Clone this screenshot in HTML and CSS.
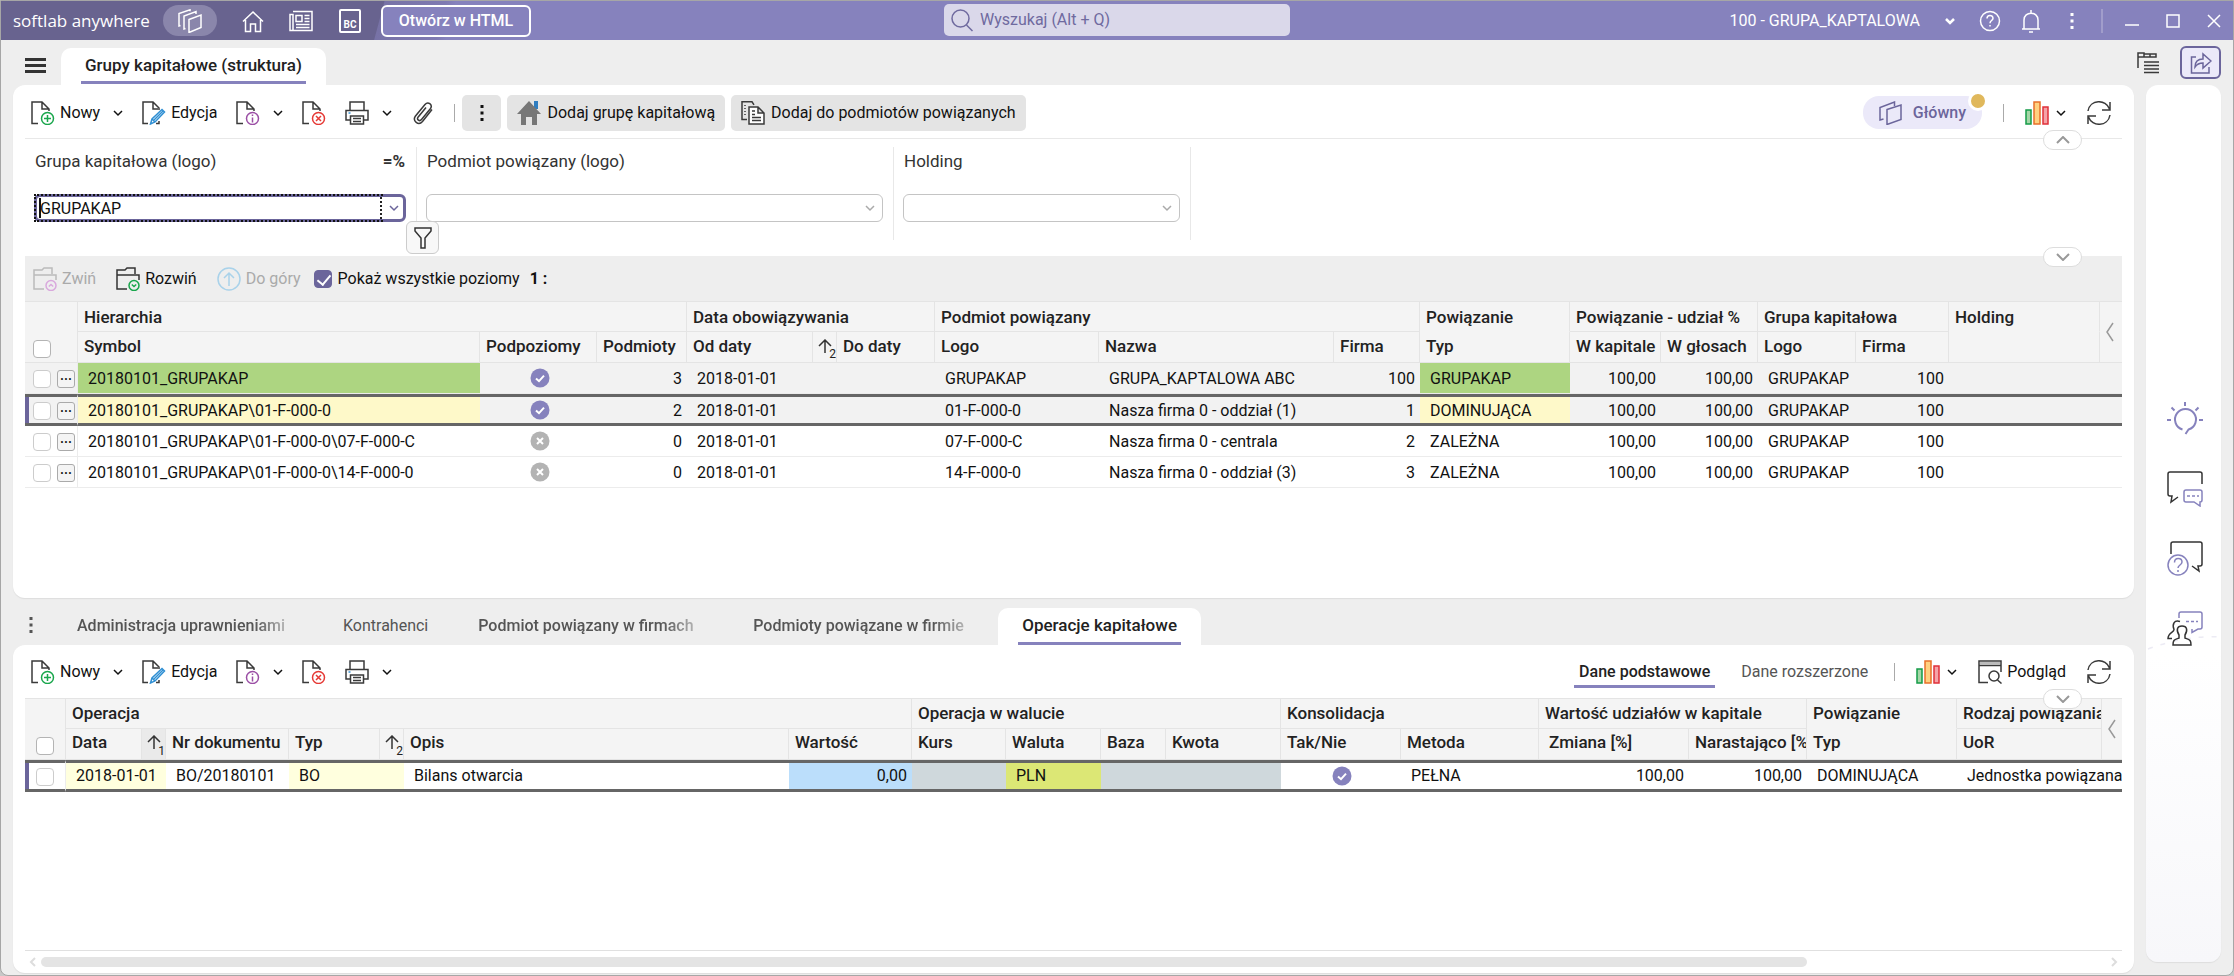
FILE: index.html
```html
<!DOCTYPE html>
<html lang="pl">
<head>
    <meta charset="UTF-8">
    <meta name="viewport" content="width=device-width, initial-scale=1.0">
    <title>Grupy kapitałowe (struktura)</title>
    <link rel="stylesheet" href="styles.css">
</head>
<body>
    <!-- Icon sprite -->
    <svg class="sprite" aria-hidden="true">
        <symbol id="doc-add" viewBox="0 0 24 24">
            <path d="M7 22.5H1V1h10l7 7v2M11 1v7h7" stroke="#3a3a3a" />
            <circle cx="16.500" cy="17.500" r="6" stroke="#19a64c" />
            <path d="M16.500 14v7M13 17.500h7" stroke="#19a64c" />
        </symbol>
        <symbol id="doc-edit" viewBox="0 0 24 24">
            <path d="M6 22.500H1V1h10l6 6v2M11 1v7h5M14 22.500h3V20" stroke="#3a3a3a" />
            <path d="M8.500 23l1.500-5L20 8.500l2.500 2.500L13 21z" fill="#fff" stroke="#2f8fd3" />
            <path d="M10 18l3 3M11.500 19.500L21 10" stroke="#2f8fd3" />
        </symbol>
        <symbol id="doc-info" viewBox="0 0 24 24">
            <path d="M7 22.500H1V1h10l7 7v2M11 1v7h7" stroke="#3a3a3a" />
            <circle cx="16.500" cy="17.500" r="6" stroke="#9b4fa5" />
            <path d="M16.500 16.500v5M16.500 13.500v1.500" stroke="#9b4fa5" />
        </symbol>
        <symbol id="doc-del" viewBox="0 0 24 24">
            <path d="M7 22.500H1V1h10l7 7v2M11 1v7h7" stroke="#3a3a3a" />
            <circle cx="16.500" cy="17.500" r="6" stroke="#e53935" />
            <path d="M14 15l5 5M19 15l-5 5" stroke="#e53935" />
        </symbol>
        <symbol id="printer" viewBox="0 0 24 24">
            <path d="M5 9V1h14v8M5 19H1V9.500h22V19h-4M5.500 15h13v8h-13zM8 17.500h8M8 20.500h8" stroke="#3a3a3a" />
            <path d="M3.500 12h2" stroke="#2f8fd3" />
        </symbol>
        <symbol id="clip" viewBox="0 0 24 24">
            <path d="M21 8.500l-9.500 12c-4 4.500-10.500-.5-7-5.500L14 3.500c3-3.500 8 0 5.500 4L10.500 18.500c-2 2.500-5 0-3.500-2.300L15 6.500" stroke="#3a3a3a" />
        </symbol>
        <symbol id="house" viewBox="0 0 24 24">
            <path d="M17 0h4v8h-4z" fill="#2f7dc0" stroke="none" />
            <path d="M12 0L0 13h4v11h5v-8h6v8h5V13h4z" fill="#777" stroke="none" />
        </symbol>
        <symbol id="copy" viewBox="0 0 24 24">
            <path d="M6 18.500H1V.800h10l2 3" stroke="#3a3a3a" />
            <path d="M4 4v12" stroke="#3a3a3a" stroke-dasharray="1 2" />
            <path d="M8 6h9l6 6v11H8zM17 6v6h6M11 10h3M11 13.500h3M11 16.500h9M11 19.500h9" fill="#fff" stroke="#3a3a3a" />
        </symbol>
        <symbol id="chev" viewBox="0 0 10 10">
            <path d="M1 3l4 4 4-4" stroke="currentColor" />
        </symbol>
        <symbol id="bars" viewBox="0 0 24 24">
            <path d="M1 9h5v14H1z" fill="#a5d6a7" stroke="#159c48" />
            <path d="M9 1h6v22H9z" fill="#ffd180" stroke="#e8702a" />
            <path d="M18 6h5v17h-5z" fill="#f4a3a8" stroke="#e0303a" />
        </symbol>
        <symbol id="refresh" viewBox="0 0 24 24">
            <path d="M1 10C3-2 19-2 22.500 8M23 1v8h-8M23 14c-2 12-18 12-21.500 2M1 23v-8h8" stroke="#3a3a3a" />
        </symbol>
        <symbol id="layers" viewBox="0 0 24 24">
            <path d="M8 8.500L22 4v14.500L8 23.500zM4.500 18L1 19V6.500L15.500 1v4" stroke="currentColor" />
        </symbol>
        <symbol id="layers3" viewBox="0 0 24 24">
            <path d="M11 10.500l12-4.500v12.500l-12 5zM7.500 19.500L6 20V7l12-4.500v2.500M2.500 16.500L1 17V4.500L12 .800v1.500" stroke="currentColor" />
        </symbol>
        <symbol id="folder-up" viewBox="0 0 24 24">
            <path d="M11 22H1V3h8l2-2h8v6M1 8h22v5" stroke="#bbb" />
            <circle cx="18" cy="18.500" r="5" stroke="#d9a9dd" />
            <path d="M15.800 19.500l2.200-2 2.200 2" stroke="#d9a9dd" />
        </symbol>
        <symbol id="folder-down" viewBox="0 0 24 24">
            <path d="M11 22H1V3h8l2-2h8v6M1 8h22v5" stroke="#333" />
            <circle cx="18" cy="18.500" r="5" stroke="#19a64c" />
            <path d="M15.800 17.500l2.200 2 2.200-2" stroke="#19a64c" />
        </symbol>
        <symbol id="up" viewBox="0 0 24 24">
            <circle cx="12" cy="12" r="11" stroke="#a9d2ea" />
            <path d="M12 19V6M7 11l5-5 5 5" stroke="#a9d2ea" />
        </symbol>
        <symbol id="sort" viewBox="0 0 14 14">
            <path d="M7 14V1M1 7l6-6 6 6" stroke="#333" />
        </symbol>
        <symbol id="yes" viewBox="0 0 20 20">
            <circle cx="10" cy="10" r="9.500" fill="#8682bd" />
            <path d="M6 10.500l3 2.700 5-5.500" stroke="#fff" stroke-width="2" />
        </symbol>
        <symbol id="no" viewBox="0 0 20 20">
            <circle cx="10" cy="10" r="9.500" fill="#b3b3b3" />
            <path d="M7 7l6 6M13 7l-6 6" stroke="#fff" stroke-width="2" />
        </symbol>
        <symbol id="dots" viewBox="0 0 4 20">
            <path d="M.5 2h3v3h-3zM.5 8.500h3v3h-3zM.5 15h3v3h-3z" fill="currentColor" />
        </symbol>
    </svg>

    <div class="window">
        <header class="titlebar">
            <span class="brand">softlab anywhere</span>
            <button class="app-pill" aria-label="Moduły"><svg class="icon"><use href="#layers3" /></svg></button>
            <button class="tb-btn tb-home" aria-label="Start">
                <svg class="icon" viewBox="0 0 24 24"><path d="M2 12.500L12 3l10 9.500M4.500 11v11.500h5V15h5v7.500h5V11" stroke="#fff" /></svg>
            </button>
            <button class="tb-btn tb-news" aria-label="Wiadomości">
                <svg class="icon" viewBox="0 0 24 24"><path d="M4 2.500h19v19H1v-16h3v16M7 6.500h6v6H7zM15.500 6.500h5M15.500 9.500h5M15.500 12.500h5M7 15.500h13.500M7 18.500h13.500" stroke="#fff" /></svg>
            </button>
            <button class="bc-btn">BC</button>
            <a class="html-btn" href="#">Otwórz w HTML</a>
            <label class="search">
                <svg class="icon" viewBox="0 0 24 24"><circle cx="10.500" cy="10.500" r="8.500" stroke="#6f6a9f" /><path d="M16.500 17l6 6" stroke="#6f6a9f" /></svg>
                <input type="text" placeholder="Wyszukaj (Alt + Q)" aria-label="Wyszukaj">
            </label>
            <div class="tb-right">
                <button class="company">100 - GRUPA_KAPTALOWA <svg class="chev"><use href="#chev" /></svg></button>
                <button class="tb-btn" aria-label="Pomoc">
                    <svg class="icon" viewBox="0 0 24 24"><circle cx="12" cy="12" r="9.500" stroke="#fff" /><path d="M9 9.500c0-4 6-4 6-.3 0 2.300-3 2.300-3 5M12 16v1.500" stroke="#fff" /></svg>
                </button>
                <button class="tb-btn" aria-label="Powiadomienia">
                    <svg class="icon" viewBox="0 0 24 24"><path d="M3 20h18M5 20v-9c0-9 14-9 14 0v9M12 1v3M10 23h4" stroke="#fff" /></svg>
                </button>
                <button class="tb-btn" aria-label="Więcej"><svg class="dots"><use href="#dots" /></svg></button>
                <span class="tb-sep"></span>
                <div class="win-btns">
                    <button aria-label="Minimalizuj"><svg viewBox="0 0 14 14"><path d="M0 11h14" stroke="#fff" /></svg></button>
                    <button aria-label="Maksymalizuj"><svg viewBox="0 0 14 14"><path d="M1 1h12v12H1z" stroke="#fff" /></svg></button>
                    <button aria-label="Zamknij"><svg viewBox="0 0 14 14"><path d="M1 1l12 12M13 1L1 13" stroke="#fff" /></svg></button>
                </div>
            </div>
        </header>

        <nav class="topnav">
            <button class="burger" aria-label="Menu"><span></span><span></span><span></span></button>
            <a class="tab active" href="#">Grupy kapitałowe (struktura)</a>
            <div class="topnav-right">
                <button class="plain" aria-label="Lista">
                    <svg class="icon22" viewBox="0 0 22 22"><path d="M1 16V1h6v4H1M7 2h6v3H7M13 2h6v3h-6" stroke="#3a3a3a" /><path d="M7 10h15M7 13.500h15M7 17h15M7 20.500h15" stroke="#3a3a3a" /></svg>
                </button>
                <button class="share" aria-label="Udostępnij">
                    <svg class="icon22" viewBox="0 0 22 22"><path d="M6 5H1.500v16H19v-6M5 15c0-6 3-8 8-8V2l8 7-8 7v-5c-4 0-6 1-8 4z" stroke="#6b659b" /></svg>
                </button>
            </div>
        </nav>

        <div class="workspace">
            <main class="panes">
                <section class="panel panel-top">
                    <div class="toolbar">
                        <button class="tool"><svg class="icon"><use href="#doc-add" /></svg>Nowy<svg class="chev"><use href="#chev" /></svg></button>
                        <button class="tool"><svg class="icon"><use href="#doc-edit" /></svg>Edycja</button>
                        <button class="tool" aria-label="Informacje"><svg class="icon"><use href="#doc-info" /></svg><svg class="chev"><use href="#chev" /></svg></button>
                        <button class="tool" aria-label="Usuń"><svg class="icon"><use href="#doc-del" /></svg></button>
                        <button class="tool" aria-label="Drukuj"><svg class="icon"><use href="#printer" /></svg><svg class="chev"><use href="#chev" /></svg></button>
                        <button class="tool" aria-label="Załączniki"><svg class="icon"><use href="#clip" /></svg></button>
                        <span class="sep"></span>
                        <div class="tool-group">
                            <button class="gray-btn more" aria-label="Więcej"><svg class="dots"><use href="#dots" /></svg></button>
                            <button class="gray-btn"><svg class="icon"><use href="#house" /></svg>Dodaj grupę kapitałową</button>
                            <button class="gray-btn"><svg class="icon"><use href="#copy" /></svg>Dodaj do podmiotów powiązanych</button>
                        </div>
                        <div class="toolbar-right">
                            <button class="view-pill"><svg class="icon"><use href="#layers" /></svg>Główny<span class="dot"></span></button>
                            <span class="sep"></span>
                            <button class="tool tight" aria-label="Wykresy"><svg class="icon"><use href="#bars" /></svg><svg class="chev"><use href="#chev" /></svg></button>
                            <button class="tool" aria-label="Odśwież"><svg class="icon"><use href="#refresh" /></svg></button>
                        </div>
                    </div>

                    <div class="filters">
                        <button class="fold fold-up" aria-label="Zwiń filtry"><svg viewBox="0 0 14 8"><path d="M1 7l6-6 6 6" stroke="#999" stroke-width="2" /></svg></button>
                        <div class="filter active">
                            <div class="filter-head"><label for="f1">Grupa kapitałowa (logo)</label><b>=%</b></div>
                            <div class="combo"><input id="f1" type="text" value="GRUPAKAP"><svg class="chev"><use href="#chev" /></svg></div>
                            <button class="funnel" aria-label="Filtruj"><svg viewBox="0 0 18 22"><path d="M1 1h16v3l-6 7v10H7V11L1 4z" stroke="#333" /></svg></button>
                        </div>
                        <div class="filter">
                            <div class="filter-head"><label for="f2">Podmiot powiązany (logo)</label></div>
                            <div class="combo"><input id="f2" type="text"><svg class="chev"><use href="#chev" /></svg></div>
                        </div>
                        <div class="filter">
                            <div class="filter-head"><label for="f3">Holding</label></div>
                            <div class="combo"><input id="f3" type="text"><svg class="chev"><use href="#chev" /></svg></div>
                        </div>
                    </div>

                    <div class="levels">
                        <button class="fold" aria-label="Rozwiń"><svg viewBox="0 0 14 8"><path d="M1 1l6 6 6-6" stroke="#999" stroke-width="2" /></svg></button>
                        <button class="tool level" disabled><svg class="icon"><use href="#folder-up" /></svg>Zwiń</button>
                        <button class="tool level"><svg class="icon"><use href="#folder-down" /></svg>Rozwiń</button>
                        <button class="tool level" disabled><svg class="icon"><use href="#up" /></svg>Do góry</button>
                        <label class="all-levels"><input type="checkbox" checked> Pokaż wszystkie poziomy</label>
                        <b>1 :</b>
                    </div>

                    <table class="grid grid-struct">
                        <colgroup>
                            <col class="w53"><col class="w402"><col class="w117"><col class="w90"><col class="w126"><col class="w24"><col class="w98"><col class="w164"><col class="w235"><col class="w86"><col class="w150"><col class="w91"><col class="w97"><col class="w98"><col class="w93"><col><col class="w22">
                        </colgroup>
                        <thead>
                            <tr>
                                <th rowspan="2" class="pick"><input type="checkbox" aria-label="Zaznacz wszystkie"></th>
                                <th colspan="3">Hierarchia</th>
                                <th colspan="3">Data obowiązywania</th>
                                <th colspan="3">Podmiot powiązany</th>
                                <th class="open">Powiązanie</th>
                                <th colspan="2">Powiązanie - udział %</th>
                                <th colspan="2">Grupa kapitałowa</th>
                                <th class="open">Holding</th>
                                <th rowspan="2" class="slide"><svg viewBox="0 0 8 20"><path d="M7 1L1 10l6 9" stroke="#999" /></svg></th>
                            </tr>
                            <tr>
                                <th>Symbol</th>
                                <th>Podpoziomy</th>
                                <th>Podmioty</th>
                                <th>Od daty</th>
                                <th class="sort"><svg><use href="#sort" /></svg><small>2</small></th>
                                <th>Do daty</th>
                                <th>Logo</th>
                                <th>Nazwa</th>
                                <th>Firma</th>
                                <th>Typ</th>
                                <th>W kapitale</th>
                                <th>W głosach</th>
                                <th>Logo</th>
                                <th>Firma</th>
                                <th></th>
                            </tr>
                        </thead>
                        <tbody>
                            <tr class="shade">
                                <td class="pick"><input type="checkbox" aria-label="Zaznacz"><button>···</button></td>
                                <td class="green">20180101_GRUPAKAP</td>
                                <td class="mid"><svg class="state"><use href="#yes" /></svg></td>
                                <td class="num">3</td>
                                <td colspan="2">2018-01-01</td>
                                <td></td>
                                <td>GRUPAKAP</td>
                                <td>GRUPA_KAPTALOWA ABC</td>
                                <td class="num">100</td>
                                <td class="green">GRUPAKAP</td>
                                <td class="num">100,00</td>
                                <td class="num">100,00</td>
                                <td>GRUPAKAP</td>
                                <td class="num">100</td>
                                <td colspan="2"></td>
                            </tr>
                            <tr class="shade selected">
                                <td class="pick"><input type="checkbox" aria-label="Zaznacz"><button>···</button></td>
                                <td class="yellow">20180101_GRUPAKAP\01-F-000-0</td>
                                <td class="mid"><svg class="state"><use href="#yes" /></svg></td>
                                <td class="num">2</td>
                                <td colspan="2">2018-01-01</td>
                                <td></td>
                                <td>01-F-000-0</td>
                                <td>Nasza firma 0 - oddział (1)</td>
                                <td class="num">1</td>
                                <td class="yellow">DOMINUJĄCA</td>
                                <td class="num">100,00</td>
                                <td class="num">100,00</td>
                                <td>GRUPAKAP</td>
                                <td class="num">100</td>
                                <td colspan="2"></td>
                            </tr>
                            <tr>
                                <td class="pick"><input type="checkbox" aria-label="Zaznacz"><button>···</button></td>
                                <td>20180101_GRUPAKAP\01-F-000-0\07-F-000-C</td>
                                <td class="mid"><svg class="state"><use href="#no" /></svg></td>
                                <td class="num">0</td>
                                <td colspan="2">2018-01-01</td>
                                <td></td>
                                <td>07-F-000-C</td>
                                <td>Nasza firma 0 - centrala</td>
                                <td class="num">2</td>
                                <td>ZALEŻNA</td>
                                <td class="num">100,00</td>
                                <td class="num">100,00</td>
                                <td>GRUPAKAP</td>
                                <td class="num">100</td>
                                <td colspan="2"></td>
                            </tr>
                            <tr>
                                <td class="pick"><input type="checkbox" aria-label="Zaznacz"><button>···</button></td>
                                <td>20180101_GRUPAKAP\01-F-000-0\14-F-000-0</td>
                                <td class="mid"><svg class="state"><use href="#no" /></svg></td>
                                <td class="num">0</td>
                                <td colspan="2">2018-01-01</td>
                                <td></td>
                                <td>14-F-000-0</td>
                                <td>Nasza firma 0 - oddział (3)</td>
                                <td class="num">3</td>
                                <td>ZALEŻNA</td>
                                <td class="num">100,00</td>
                                <td class="num">100,00</td>
                                <td>GRUPAKAP</td>
                                <td class="num">100</td>
                                <td colspan="2"></td>
                            </tr>
                        </tbody>
                    </table>
                </section>

                <nav class="subnav">
                    <button class="plain subnav-more" aria-label="Więcej"><svg class="dots"><use href="#dots" /></svg></button>
                    <a class="subtab fade w216" href="#">Administracja uprawnieniami</a>
                    <a class="subtab light" href="#">Kontrahenci</a>
                    <a class="subtab fade w225" href="#">Podmiot powiązany w firmach</a>
                    <a class="subtab fade w220" href="#">Podmioty powiązane w firmie</a>
                    <a class="tab active" href="#">Operacje kapitałowe</a>
                </nav>

                <section class="panel panel-bottom">
                    <div class="toolbar">
                        <button class="tool"><svg class="icon"><use href="#doc-add" /></svg>Nowy<svg class="chev"><use href="#chev" /></svg></button>
                        <button class="tool"><svg class="icon"><use href="#doc-edit" /></svg>Edycja</button>
                        <button class="tool" aria-label="Informacje"><svg class="icon"><use href="#doc-info" /></svg><svg class="chev"><use href="#chev" /></svg></button>
                        <button class="tool" aria-label="Usuń"><svg class="icon"><use href="#doc-del" /></svg></button>
                        <button class="tool" aria-label="Drukuj"><svg class="icon"><use href="#printer" /></svg><svg class="chev"><use href="#chev" /></svg></button>
                        <div class="toolbar-right">
                            <a class="view active" href="#">Dane podstawowe</a>
                            <a class="view" href="#">Dane rozszerzone</a>
                            <span class="sep"></span>
                            <button class="tool tight" aria-label="Wykresy"><svg class="icon"><use href="#bars" /></svg><svg class="chev"><use href="#chev" /></svg></button>
                            <button class="tool"><svg class="icon" viewBox="0 0 24 24"><path d="M10 22.500H1V1h22v11M1 5.500h22" stroke="#3a3a3a" /><path d="M2 2h20v3H2z" fill="#bbb" /><circle cx="16" cy="16" r="5" stroke="#3a3a3a" /><path d="M19.500 20l4 3.500" stroke="#3a3a3a" /></svg>Podgląd</button>
                            <button class="tool" aria-label="Odśwież"><svg class="icon"><use href="#refresh" /></svg></button>
                        </div>
                    </div>

                    <div class="ops">
                        <button class="fold" aria-label="Rozwiń"><svg viewBox="0 0 14 8"><path d="M1 1l6 6 6-6" stroke="#999" stroke-width="2" /></svg></button>
                        <table class="grid grid-ops">
                            <colgroup>
                                <col class="w41"><col class="w76"><col class="w24"><col class="w123"><col class="w91"><col class="w24"><col><col class="w123"><col class="w94"><col class="w95"><col class="w65"><col class="w115"><col class="w120"><col class="w138"><col class="w150"><col class="w118"><col class="w150"><col class="w145"><col class="w20">
                            </colgroup>
                            <thead>
                                <tr>
                                    <th rowspan="2" class="pick"><input type="checkbox" aria-label="Zaznacz wszystkie"></th>
                                    <th colspan="7">Operacja</th>
                                    <th colspan="4">Operacja w walucie</th>
                                    <th colspan="2">Konsolidacja</th>
                                    <th colspan="2">Wartość udziałów w kapitale</th>
                                    <th class="open">Powiązanie</th>
                                    <th>Rodzaj powiązania</th>
                                    <th rowspan="2" class="slide"><svg viewBox="0 0 8 20"><path d="M7 1L1 10l6 9" stroke="#999" /></svg></th>
                                </tr>
                                <tr>
                                    <th>Data</th>
                                    <th class="sort on"><svg><use href="#sort" /></svg><small>1</small></th>
                                    <th>Nr dokumentu</th>
                                    <th>Typ</th>
                                    <th class="sort"><svg><use href="#sort" /></svg><small>2</small></th>
                                    <th>Opis</th>
                                    <th>Wartość</th>
                                    <th>Kurs</th>
                                    <th>Waluta</th>
                                    <th>Baza</th>
                                    <th>Kwota</th>
                                    <th>Tak/Nie</th>
                                    <th>Metoda</th>
                                    <th class="inset">Zmiana [%]</th>
                                    <th>Narastająco [%]</th>
                                    <th>Typ</th>
                                    <th>UoR</th>
                                </tr>
                            </thead>
                            <tbody>
                                <tr class="selected">
                                    <td class="pick"><input type="checkbox" aria-label="Zaznacz"></td>
                                    <td colspan="2" class="cream">2018-01-01</td>
                                    <td>BO/20180101</td>
                                    <td colspan="2" class="cream">BO</td>
                                    <td>Bilans otwarcia</td>
                                    <td class="num blue">0,00</td>
                                    <td class="steel"></td>
                                    <td class="lime">PLN</td>
                                    <td class="steel"></td>
                                    <td class="steel"></td>
                                    <td class="mid"><svg class="state"><use href="#yes" /></svg></td>
                                    <td>PEŁNA</td>
                                    <td class="num">100,00</td>
                                    <td class="num">100,00</td>
                                    <td>DOMINUJĄCA</td>
                                    <td colspan="2">Jednostka powiązana</td>
                                </tr>
                            </tbody>
                        </table>
                    </div>

                    <div class="hscroll">
                        <svg viewBox="0 0 8 10"><path d="M6 1L2 5l4 4" stroke="#ddd" stroke-width="2" /></svg>
                        <div class="track"><div class="thumb"></div></div>
                        <svg viewBox="0 0 8 10"><path d="M2 1l4 4-4 4" stroke="#ddd" stroke-width="2" /></svg>
                    </div>
                </section>
            </main>

            <aside class="side">
                <svg class="arc" viewBox="0 0 75 40"><path d="M2 14Q40 0 75 2" stroke="#ecebf4" stroke-dasharray="5 8" /></svg>
                <button class="plain" aria-label="Pomysły">
                    <svg viewBox="0 0 36 36"><path d="M15.500 28.500a10.500 10.500 0 1 1 6 0l-3 4.500" stroke="#8682bd" stroke-width="2" /><path d="M18 1v4M0 19h4M32 19h4M4.500 6.500l3 3M31.500 6.500l-3 3" stroke="#8682bd" stroke-width="2" /></svg>
                </button>
                <button class="plain" aria-label="Czat">
                    <svg viewBox="0 0 36 36"><path d="M35 13V3q0-2-2-2H3Q1 1 1 3v20q0 2 2 2h2l-1 6 7-5" stroke="#333" /><path d="M19 19h14q2 0 2 2v8q0 2-2 2v4l-6-4h-8q-2 0-2-2v-8q0-2 2-2z" stroke="#8682bd" /><path d="M20 25h12" stroke="#8682bd" stroke-dasharray="3 2" /></svg>
                </button>
                <button class="plain" aria-label="Pytania">
                    <svg viewBox="0 0 36 36"><path d="M4 13V3q0-2 2-2h27q2 0 2 2v20q0 2-2 2h-2l1 5-7-5" stroke="#333" /><circle cx="11" cy="24" r="10" stroke="#8682bd" /><path d="M7.500 21.500c0-5.500 7.500-5 7.500-.5 0 3-4 3-4 6M11 29v2" stroke="#8682bd" /></svg>
                </button>
                <button class="plain" aria-label="Społeczność">
                    <svg viewBox="0 0 36 36"><path d="M12 7V3q0-2 2-2h19q2 0 2 2v13q0 2-2 2h-2l-6 3.500V18" stroke="#8682bd" /><path d="M19 10.500h12" stroke="#8682bd" stroke-dasharray="3 2" /><path d="M13 10.500c-6-2-8 3-6 8 0 3-6 3-6 9h4" stroke="#333" /><path d="M6 34c0-5 1-5 6-7v-3c-3-5-2-9 3-9s6 4 3 9v3c5 2 6 2 6 7z" stroke="#333" /></svg>
                </button>
            </aside>
        </div>
    </div>
</body>
</html>
```
FILE: styles.css
```css
* {
    box-sizing: border-box;
}

body {
    margin: 0;
    background: #c8c8c8;
    font-family: Roboto, "Liberation Sans", sans-serif;
    font-size: 16px;
    line-height: 20px;
    color: #111;
}

button, input {
    font: inherit;
    color: inherit;
    margin: 0;
    padding: 0;
    border: 0;
    background: none;
}

a {
    color: inherit;
    text-decoration: none;
}

svg {
    display: block;
    fill: none;
    stroke-width: 1.5;
    flex-shrink: 0;
}

.sprite {
    position: absolute;
    width: 0;
    height: 0;
}

.icon {
    width: 24px;
    height: 24px;
}

.icon22 {
    width: 22px;
    height: 22px;
}

.chev {
    width: 10px;
    height: 10px;
}

.dots {
    width: 4px;
    height: 20px;
}

.plain {
    display: flex;
}

.window {
    display: flex;
    flex-direction: column;
    min-height: 100vh;
    background: #eee;
    border: 1px solid #a6a6a6;
    border-radius: 0 0 8px 8px;
}

/* --- Title bar --- */

.titlebar {
    position: relative;
    display: flex;
    align-items: center;
    height: 39px;
    padding: 0 12px;
    color: #fff;
    background: linear-gradient(105deg, #68638f 0, #68638f 370px, #7772a6 371px, #7f7ab2 430px, #8682bd 440px);
}

.brand {
    width: 150px;
    font-family: "Open Sans", sans-serif;
    font-size: 17px;
}

.app-pill {
    display: flex;
    justify-content: center;
    align-items: center;
    width: 54px;
    height: 31px;
    border-radius: 16px;
    background: #8a86ab;
}

.tb-btn {
    display: flex;
    justify-content: center;
    width: 24px;
}

.tb-home {
    margin-left: 24px;
}

.tb-news {
    margin-left: 24px;
}

.bc-btn {
    width: 22px;
    height: 24px;
    margin-left: 26px;
    padding-top: 8px;
    border: 2px solid #fff;
    border-radius: 2px;
    font-size: 10px;
    font-weight: 700;
    line-height: 10px;
}

.html-btn {
    width: 150px;
    height: 32px;
    margin-left: 20px;
    border: 2px solid #fff;
    border-radius: 6px;
    background: #8682bd;
    font-weight: 500;
    line-height: 28px;
    text-align: center;
}

.search {
    position: absolute;
    left: 50%;
    top: 3px;
    display: flex;
    align-items: center;
    gap: 6px;
    width: 346px;
    height: 32px;
    padding: 0 6px;
    margin-left: -173px;
    border-radius: 5px;
    background: #dad8ea;
    color: #6f6a9f;
}

.search input {
    flex: 1;
    outline: none;
}

.search input::placeholder {
    color: #6f6a9f;
}

.tb-right {
    display: flex;
    align-items: center;
    gap: 17px;
    margin-left: auto;
}

.company {
    display: flex;
    align-items: center;
    gap: 25px;
    margin-right: 6px;
}

.company .chev {
    stroke-width: 2.5;
}

.tb-sep {
    width: 2px;
    height: 24px;
    background: #a19dcb;
}

.win-btns {
    display: flex;
    gap: 27px;
    margin-left: 5px;
}

.win-btns svg {
    width: 14px;
    height: 14px;
}

/* --- Tabs --- */

.topnav {
    display: flex;
    align-items: flex-end;
    height: 45px;
    padding: 0 12px 0 24px;
}

.burger {
    display: flex;
    flex-direction: column;
    gap: 3px;
    width: 21px;
    margin: 0 15px 12px 0;
}

.burger span {
    height: 3px;
    background: #333;
}

.tab {
    position: relative;
    height: 37px;
    padding: 0 24px;
    border-radius: 10px 10px 0 0;
    background: #fff;
    font-size: 17px;
    font-weight: 500;
    line-height: 35px;
    color: #222;
    white-space: nowrap;
}

.tab::after {
    content: "";
    position: absolute;
    left: 20px;
    right: 20px;
    bottom: 1px;
    height: 3px;
    background: #8682bd;
}

.topnav-right {
    display: flex;
    align-items: center;
    gap: 21px;
    margin: 0 0 6px auto;
}

.share {
    display: flex;
    justify-content: center;
    align-items: center;
    width: 41px;
    height: 33px;
    border: 2px solid #6b659b;
    border-radius: 6px;
    background: #ebe9f9;
}

/* --- Layout --- */

.workspace {
    flex: 1;
    display: flex;
    gap: 12px;
    padding: 0 12px;
}

.panes {
    flex: 1;
    min-width: 0;
    display: flex;
    flex-direction: column;
    padding-bottom: 2px;
}

.panel {
    display: flex;
    flex-direction: column;
    padding: 0 12px;
    border-radius: 12px;
    background: #fff;
    box-shadow: 0 1px 1px #ddd;
}

.panel-top {
    flex: 25 1 0;
}

.panel-bottom {
    flex: 16 1 0;
}

.side {
    position: relative;
    display: flex;
    flex-direction: column;
    justify-content: center;
    align-items: center;
    gap: 34px;
    width: 75px;
    margin-bottom: 13px;
    padding-left: 3px;
    border-radius: 12px;
    background: linear-gradient(#fff 65%, #f7f7fa);
    box-shadow: 0 1px 1px #ddd;
}

.side .plain {
    position: relative;
}

.side .plain svg {
    width: 36px;
    height: 36px;
}

.side .arc {
    position: absolute;
    left: 0;
    top: 550px;
    width: 75px;
    height: 40px;
}

/* --- Toolbars --- */

.toolbar {
    display: flex;
    align-items: center;
    gap: 19px;
    height: 53px;
    padding: 2px 11px 0 6px;
}

.tool {
    display: flex;
    align-items: center;
    gap: 5px;
    white-space: nowrap;
}

.tool .chev {
    margin-left: 8px;
}

.tool.tight .chev {
    margin-left: 2px;
}

.tool:disabled {
    color: #aaa;
}

.sep {
    width: 1px;
    height: 18px;
    background: #aaa;
}

.tool-group {
    display: flex;
    gap: 6px;
    margin-left: -12px;
}

.gray-btn {
    display: flex;
    align-items: center;
    gap: 6px;
    height: 36px;
    padding: 0 10px;
    border-radius: 5px;
    background: #e4e4e4;
    white-space: nowrap;
}

.gray-btn.more {
    width: 39px;
    justify-content: center;
}

.toolbar-right {
    display: flex;
    align-items: center;
    gap: 21px;
    margin-left: auto;
}

.view-pill {
    position: relative;
    display: flex;
    align-items: center;
    gap: 10px;
    height: 33px;
    padding: 0 16px;
    border-radius: 16px;
    background: #ebe9f9;
    color: #6b659b;
    font-weight: 500;
}

.dot {
    position: absolute;
    right: -6px;
    top: -5px;
    width: 20px;
    height: 20px;
    border: 3px solid #fff;
    border-radius: 10px;
    background: #e0b85c;
}

.fold {
    position: absolute;
    z-index: 2;
    right: 40px;
    top: -9px;
    display: flex;
    justify-content: center;
    align-items: center;
    width: 39px;
    height: 20px;
    border: 1px solid #ddd;
    border-radius: 10px;
    background: #fff;
}

.fold svg {
    width: 14px;
    height: 8px;
}

/* --- Filters --- */

.filters {
    position: relative;
    display: flex;
    padding: 8px 0 16px;
    border-top: 1px solid #e8e8e8;
}

.filter {
    position: relative;
    width: 297px;
    height: 93px;
    padding: 4px 10px 0 9px;
    border-right: 1px solid #e8e8e8;
}

.filter:nth-of-type(1) {
    width: 392px;
}

.filter:nth-of-type(2) {
    width: 477px;
}

.filter-head {
    display: flex;
    justify-content: space-between;
    padding: 0 1px;
    color: #333;
    font-size: 17px;
}

.combo {
    position: relative;
    display: flex;
    align-items: center;
    height: 28px;
    margin-top: 23px;
    padding-right: 7px;
    border: 1px solid #c4c4c4;
    border-radius: 6px;
    color: #aaa;
}

.combo input {
    flex: 1;
    min-width: 0;
    height: 20px;
    outline: none;
    color: #111;
}

.filter.active .combo {
    padding-right: 4px;
    border: 3px solid #6b659b;
    color: #6b659b;
}

.filter.active .combo input {
    height: 22px;
    margin-right: 7px;
    padding-left: 3px;
    border-right: 2px dotted #222;
}

.filter.active .combo::before {
    content: "";
    position: absolute;
    left: -3px;
    top: -3px;
    right: 20px;
    bottom: -3px;
    border: 2px dotted #111;
    border-right: 0;
}

.filter.active .combo::after {
    content: "";
    position: absolute;
    left: 2px;
    top: 1px;
    width: 2px;
    height: 20px;
    background: #111;
}

.funnel {
    position: absolute;
    z-index: 2;
    right: -23px;
    bottom: -14px;
    display: flex;
    justify-content: center;
    align-items: center;
    width: 33px;
    height: 33px;
    border: 1px solid #ccc;
    border-radius: 6px;
    background: #f8f8f8;
}

.funnel svg {
    width: 18px;
    height: 22px;
}

.levels {
    position: relative;
    display: flex;
    align-items: center;
    gap: 6px;
    height: 45px;
    padding-left: 8px;
    background: #eee;
}

.levels b {
    margin-left: 4px;
}

.tool.level {
    margin-right: 14px;
}

.all-levels {
    display: flex;
    align-items: center;
    gap: 6px;
    margin-left: -7px;
}

input[type="checkbox"] {
    appearance: none;
    width: 18px;
    height: 18px;
    border: 1px solid #b4b4b4;
    border-radius: 4px;
    background: #fff;
}

input[type="checkbox"]:checked {
    border-color: #6b659b;
    background: #6b659b;
}

.all-levels input {
    position: relative;
}

.all-levels input::after {
    content: "";
    position: absolute;
    left: 5px;
    top: 1px;
    width: 6px;
    height: 11px;
    border: solid #fff;
    border-width: 0 2px 2px 0;
    transform: rotate(40deg);
}

/* --- Data grids --- */

.grid {
    width: 100%;
    table-layout: fixed;
    border-collapse: separate;
    border-spacing: 0;
}

.grid th {
    height: 31px;
    padding: 0 0 0 6px;
    border-right: 1px solid #e4e4e4;
    border-bottom: 1px solid #e4e4e4;
    background: #f4f4f4;
    font-size: 17px;
    font-weight: 500;
    text-align: left;
    color: #222;
    white-space: nowrap;
    overflow: hidden;
}

.grid tr:first-child th {
    border-top: 1px solid #e4e4e4;
}

.grid tr + tr th {
    padding-bottom: 3px;
}

.grid th.open {
    border-bottom-color: #f4f4f4;
}

.grid th.inset {
    padding-left: 10px;
}

.grid th.pick {
    padding: 0 0 4px 8px;
    vertical-align: bottom;
}

.grid th.pick input {
    display: block;
}

.grid-ops th.pick,
.grid-ops td.pick {
    padding-left: 11px;
}

.grid th.slide {
    padding: 0 0 0 6px;
    border-right: 0;
}

.grid th.slide svg {
    width: 8px;
    height: 20px;
}

.grid th.sort {
    position: relative;
    padding-left: 5px;
}

.grid th.sort.on {
    background: #eaeaea;
}

.sort svg {
    width: 14px;
    height: 14px;
}

.sort small {
    position: absolute;
    right: 0;
    bottom: 2px;
    font-size: 12px;
    font-weight: 400;
    line-height: 12px;
}

.grid td {
    height: 31px;
    padding: 1px 5px 0 10px;
    border-bottom: 1px solid #ececec;
    white-space: nowrap;
    overflow: hidden;
}

.grid td.num {
    text-align: right;
}

.grid td.mid {
    padding: 0 0 0 3px;
}

.grid td.pick {
    padding: 0 0 0 8px;
    border-right: 1px solid #ececec;
}

.grid-ops td.pick {
    padding-left: 11px;
}

.pick input {
    vertical-align: middle;
}

.grid td.pick input {
    border-color: #ccc;
}

.pick button {
    width: 18px;
    height: 18px;
    margin-left: 6px;
    border: 1px solid #aaa;
    border-radius: 3px;
    background: #f4f4f4;
    font-size: 14px;
    font-weight: 500;
    line-height: 14px;
    vertical-align: middle;
}

.state {
    width: 20px;
    height: 20px;
    margin: 0 auto;
}

.shade td {
    background: #f2f2f2;
}

.grid .selected td {
    height: 32px;
    border-top: 3px solid #666;
    border-bottom: 3px solid #666;
}

.grid .selected td.pick {
    box-shadow: inset 4px 0 #6b659b;
}

.grid td.green {
    background: #add581;
}

.grid td.yellow {
    background: #fef9c9;
}

.grid td.cream {
    background: #ffffde;
}

.grid td.blue {
    background: #bbdefb;
}

.grid td.steel {
    background: #cfd8dc;
}

.grid td.lime {
    background: #dce775;
}

/* column widths */
.w20 { width: 20px; }
.w22 { width: 22px; }
.w24 { width: 24px; }
.w41 { width: 41px; }
.w53 { width: 53px; }
.w65 { width: 65px; }
.w76 { width: 76px; }
.w86 { width: 86px; }
.w90 { width: 90px; }
.w91 { width: 91px; }
.w93 { width: 93px; }
.w94 { width: 94px; }
.w95 { width: 95px; }
.w97 { width: 97px; }
.w98 { width: 98px; }
.w115 { width: 115px; }
.w117 { width: 117px; }
.w118 { width: 118px; }
.w120 { width: 120px; }
.w123 { width: 123px; }
.w126 { width: 126px; }
.w138 { width: 138px; }
.w145 { width: 145px; }
.w150 { width: 150px; }
.w164 { width: 164px; }
.w235 { width: 235px; }
.w402 { width: 402px; }

/* --- Lower pane --- */

.subnav {
    display: flex;
    align-items: flex-end;
    height: 47px;
    padding-left: 16px;
    color: #555;
}

.subnav-more {
    width: 23px;
    height: 37px;
    padding-top: 7px;
}

.subtab {
    height: 37px;
    margin: 0 25px;
    font-weight: 500;
    line-height: 35px;
    white-space: nowrap;
    overflow: hidden;
}

.subtab.light {
    font-weight: 400;
}

.subtab.fade {
    mask-image: linear-gradient(to right, #000 82%, transparent 105%);
}

.w216 { width: 216px; }
.w220 { width: 220px; }
.w225 { width: 225px; }

.subnav .tab::after {
    bottom: 0;
}

.view {
    position: relative;
    padding: 0 5px;
    color: #555;
    white-space: nowrap;
}

.view.active {
    font-weight: 500;
    color: #222;
}

.view.active::after {
    content: "";
    position: absolute;
    left: 0;
    right: 0;
    bottom: -6px;
    height: 3px;
    background: #8682bd;
}

.ops {
    position: relative;
}

.hscroll {
    display: flex;
    align-items: center;
    gap: 4px;
    height: 23px;
    margin-top: auto;
    padding: 0 4px;
    border-top: 1px solid #e0e0e0;
}

.hscroll svg {
    width: 8px;
    height: 10px;
}

.track {
    flex: 1;
}

.thumb {
    width: 85.5%;
    height: 10px;
    border-radius: 5px;
    background: #e4e4e4;
}
```
